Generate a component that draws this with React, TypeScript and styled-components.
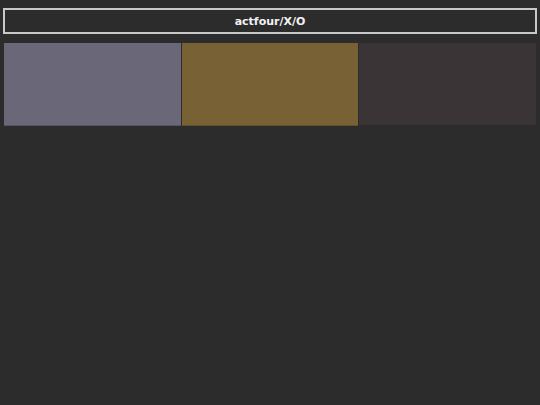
import * as React from "react";
import styled, { createGlobalStyle } from "styled-components";

const GlobalStyle = createGlobalStyle`
    html, body {
        margin: 0;
        background: #2c2c2c;
        height: 100%;
    }
`;

const Page = styled.div`
    display: flex;
    flex-direction: column;
    gap: 9px;
    padding: 8px 3px;
    font-family: "DejaVu Sans", Verdana, sans-serif;
`;

const TitleBar = styled.div`
    box-sizing: border-box;
    height: 26px;
    border: 2px solid #c9c9c9;
    display: flex;
    align-items: center;
    justify-content: center;
    color: #f2f2f2;
    font-size: 11px;
    font-weight: bold;
`;

const Palette = styled.div`
    display: grid;
    grid-template-columns: repeat(3, 1fr);
    gap: 1px;
    margin: 0 1px;
    height: 83px;
`;

const Swatch = styled.div<{ $color: string }>`
    background: ${p => p.$color};
    border-bottom: 1px solid rgba(0, 0, 0, 0.18);
`;

const COLORS = ["#6a6779", "#776135", "#3a3437"];

export default function App() {
    return (
        <>
            <GlobalStyle />
            <Page>
                <TitleBar>actfour/X/O</TitleBar>
                <Palette>
                    {COLORS.map(c => (
                        <Swatch key={c} $color={c} />
                    ))}
                </Palette>
            </Page>
        </>
    );
}
